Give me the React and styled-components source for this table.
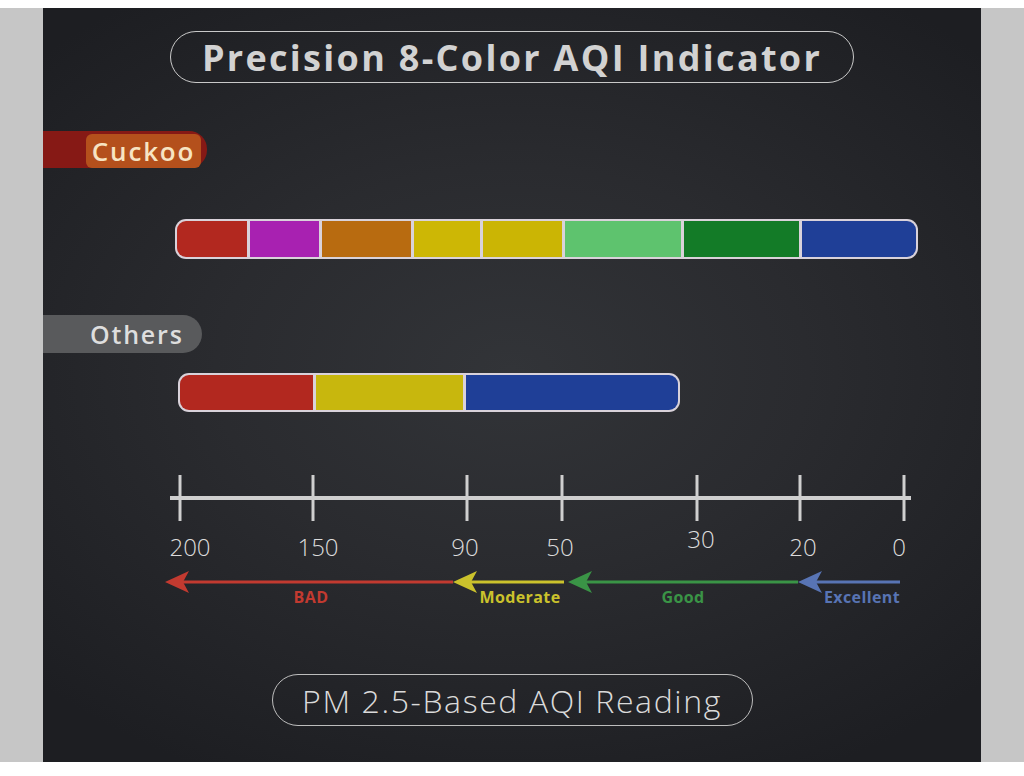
import { createGlobalStyle, styled } from 'styled-components';

const GlobalStyle = createGlobalStyle`
  html, body {
    margin: 0;
    padding: 0;
    background: #ffffff;
  }
  body {
    font-family: 'Open Sans', 'Liberation Sans', sans-serif;
  }
`;

const cuckooSegments = [
  { color: '#b2281f', w: 70 },
  { color: '#a821b1', w: 69 },
  { color: '#b86b10', w: 89 },
  { color: '#cdb705', w: 66 },
  { color: '#cbb504', w: 79 },
  { color: '#5ec36e', w: 116 },
  { color: '#137b27', w: 115 },
  { color: '#1f3f97', w: 114 },
];

const otherSegments = [
  { color: '#b2281f', w: 133 },
  { color: '#c8b70d', w: 147 },
  { color: '#1f3f97', w: 212 },
];

const ticks = [180, 313, 467, 562, 697, 800, 904];

const numbers = [
  { label: '200', x: 190, y: 556 },
  { label: '150', x: 318, y: 556 },
  { label: '90', x: 465, y: 556 },
  { label: '50', x: 560, y: 556 },
  { label: '30', x: 701, y: 548 },
  { label: '20', x: 803, y: 556 },
  { label: '0', x: 899, y: 556 },
];

const ranges = [
  { name: 'BAD', color: '#c23a30', tip: 165, end: 453, text: 311 },
  { name: 'Moderate', color: '#cbc22c', tip: 453, end: 564, text: 520 },
  { name: 'Good', color: '#3a9446', tip: 568, end: 798, text: 683 },
  { name: 'Excellent', color: '#5874b4', tip: 798, end: 900, text: 862 },
];

const Scale = () => (
  <ScaleSvg viewBox='155 470 770 140' width='770' height='140'>
    <line x1='170' y1='498' x2='911' y2='498' stroke='#cfcfcf' strokeWidth='4' />
    {ticks.map((x) => (
      <line key={x} x1={x} y1='475' x2={x} y2='521' stroke='#cfcfcf' strokeWidth='3' />
    ))}
    {numbers.map((n) => (
      <text key={n.label} x={n.x} y={n.y} className='num' textAnchor='middle'>
        {n.label}
      </text>
    ))}
    {ranges.map((r) => (
      <g key={r.name}>
        <line x1={r.tip + 12} y1='582' x2={r.end} y2='582' stroke={r.color} strokeWidth='3' />
        <path
          d={`M${r.tip} 582 L${r.tip + 24} 571 L${r.tip + 18} 582 L${r.tip + 24} 593 Z`}
          fill={r.color}
        />
        <text x={r.text} y='603' className='range' fill={r.color} textAnchor='middle'>
          {r.name}
        </text>
      </g>
    ))}
  </ScaleSvg>
);

const App = () => {
  return (
    <>
      <GlobalStyle />
      <Page>
        <Side />
        <Panel>
          <TitlePill>Precision 8-Color AQI Indicator</TitlePill>
          <CuckooBand>
            <CuckooTag>Cuckoo</CuckooTag>
          </CuckooBand>
          <Bar $left={132} $mt={51} $h={40}>
            {cuckooSegments.map((s, i) => (
              <Segment key={i} $color={s.color} $w={s.w} />
            ))}
          </Bar>
          <OthersBand>Others</OthersBand>
          <Bar $left={135} $mt={20} $h={39}>
            {otherSegments.map((s, i) => (
              <Segment key={i} $color={s.color} $w={s.w} />
            ))}
          </Bar>
          <Scale />
          <FooterPill>PM 2.5-Based AQI Reading</FooterPill>
        </Panel>
        <Side />
      </Page>
    </>
  );
};

const Page = styled.div`
  display: flex;
  padding-top: 8px;
  height: 768px;
  box-sizing: border-box;
  align-items: flex-start;
`;

const Side = styled.div`
  width: 43px;
  height: 754px;
  background: #c6c6c6;
  flex-shrink: 0;
`;

const Panel = styled.section`
  width: 938px;
  height: 754px;
  flex-shrink: 0;
  box-sizing: border-box;
  padding-top: 23px;
  display: flex;
  flex-direction: column;
  background: radial-gradient(
    ellipse 70% 60% at 50% 48%,
    #323438 0%,
    #2a2b2f 45%,
    #1d1e22 100%
  );
  overflow: hidden;
`;

const TitlePill = styled.div`
  align-self: center;
  width: 684px;
  height: 52px;
  box-sizing: border-box;
  border: 1.5px solid #c9c9c9;
  border-radius: 26px;
  display: flex;
  align-items: center;
  justify-content: center;
  color: #d2d2d2;
  font-size: 36px;
  font-weight: 700;
  letter-spacing: 2.3px;
`;

const CuckooBand = styled.div`
  margin-top: 48px;
  width: 164px;
  height: 37px;
  box-sizing: border-box;
  padding-left: 43px;
  padding-top: 3px;
  background: #861915;
  border-radius: 0 18px 18px 0;
  display: flex;
`;

const CuckooTag = styled.div`
  width: 115px;
  height: 34px;
  box-sizing: border-box;
  background: #b4501c;
  border-radius: 6px;
  display: flex;
  align-items: center;
  justify-content: center;
  color: #f7e4c2;
  font-size: 26px;
  font-weight: 600;
  letter-spacing: 1.8px;
`;

const OthersBand = styled.div`
  margin-top: 56px;
  width: 159px;
  height: 38px;
  box-sizing: border-box;
  padding-left: 47px;
  background: #595a5c;
  border-radius: 0 19px 19px 0;
  display: flex;
  align-items: center;
  color: #dedede;
  font-size: 25px;
  font-weight: 600;
  letter-spacing: 1.8px;
`;

const Bar = styled.div`
  margin-left: ${(p) => p.$left}px;
  margin-top: ${(p) => p.$mt}px;
  height: ${(p) => p.$h}px;
  align-self: flex-start;
  box-sizing: border-box;
  padding: 2px;
  display: flex;
  gap: 3px;
  background: #d9d2da;
  border-radius: 11px;
`;

const Segment = styled.div`
  width: ${(p) => p.$w}px;
  flex-shrink: 0;
  background: ${(p) => p.$color};
  &:first-child {
    border-radius: 9px 0 0 9px;
  }
  &:last-child {
    border-radius: 0 9px 9px 0;
  }
`;

const ScaleSvg = styled.svg`
  display: block;
  margin-top: 58px;
  margin-left: 112px;
  flex-shrink: 0;
  .num {
    font-family: 'Open Sans', 'Liberation Sans', sans-serif;
    font-size: 24px;
    font-weight: 300;
    fill: #dcdcdc;
  }
  .range {
    font-family: 'Open Sans', 'Liberation Sans', sans-serif;
    font-size: 16px;
    font-weight: 700;
    letter-spacing: 0.4px;
  }
`;

const FooterPill = styled.div`
  align-self: center;
  margin-top: 64px;
  width: 481px;
  height: 52px;
  box-sizing: border-box;
  border: 1.5px solid #bdbdbd;
  border-radius: 26px;
  display: flex;
  align-items: center;
  justify-content: center;
  color: #dadada;
  font-size: 32px;
  font-weight: 300;
  letter-spacing: 1.6px;
`;

export default App;
